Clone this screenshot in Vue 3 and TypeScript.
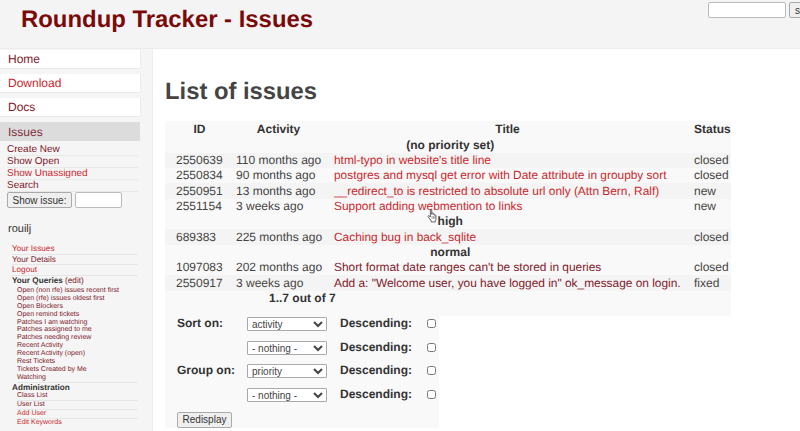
<script setup lang="ts">
type L = { t: string; v?: boolean };
const main: L[] = [{ t: 'Home', v: true }, { t: 'Download' }, { t: 'Docs', v: true }];
const issueLinks: L[] = [{ t: 'Create New', v: true }, { t: 'Show Open', v: true }, { t: 'Show Unassigned' }, { t: 'Search', v: true }];
const userLinks: L[] = [{ t: 'Your Issues' }, { t: 'Your Details', v: true }, { t: 'Logout' }];
const queries = ['Open (non rfe) issues recent first', 'Open (rfe) issues oldest first', 'Open Blockers', 'Open remind tickets', 'Patches I am watching', 'Patches assigned to me', 'Patches needing review', 'Recent Activity', 'Recent Activity (open)', 'Rest Tickets', 'Tickets Created by Me', 'Watching'];
const admin: L[] = [{ t: 'Class List', v: true }, { t: 'User List', v: true }, { t: 'Add User' }, { t: 'Edit Keywords' }];
type Row = { group?: string; id?: string; a?: string; t?: string; s?: string; v?: boolean; odd?: boolean };
const rows: Row[] = [
  { group: '(no priority set)' },
  { id: '2550639', a: '110 months ago', t: "html-typo in website's title line", s: 'closed', odd: true },
  { id: '2550834', a: '90 months ago', t: 'postgres and mysql get error with Date attribute in groupby sort', s: 'closed' },
  { id: '2550951', a: '13 months ago', t: '__redirect_to is restricted to absolute url only (Attn Bern, Ralf)', s: 'new', odd: true },
  { id: '2551154', a: '3 weeks ago', t: 'Support adding webmention to links', s: 'new' },
  { group: 'high' },
  { id: '689383', a: '225 months ago', t: 'Caching bug in back_sqlite', s: 'closed', odd: true },
  { group: 'normal' },
  { id: '1097083', a: '202 months ago', t: "Short format date ranges can't be stored in queries", s: 'closed', v: true },
  { id: '2550917', a: '3 weeks ago', t: 'Add a: "Welcome user, you have logged in" ok_message on login.', s: 'fixed', v: true, odd: true },
];
const sorts = [
  { label: 'Sort on:', value: 'activity' },
  { label: '', value: '- nothing -' },
  { label: 'Group on:', value: 'priority' },
  { label: '', value: '- nothing -' },
];
</script>

<template>
  <div class="page">
    <header class="top">
      <h1 class="brand">Roundup Tracker - Issues</h1>
      <form class="search" @submit.prevent>
        <input class="search-input" type="text" />
        <button class="search-btn" type="button">search</button>
      </form>
    </header>
    <div class="body">
      <nav class="side">
        <a v-for="m in main" :key="m.t" class="box" :class="{ v: m.v }" href="#">{{ m.t }}</a>
        <div class="box current">Issues</div>
        <ul class="sub">
          <li v-for="l in issueLinks" :key="l.t"><a :class="{ v: l.v }" href="#">{{ l.t }}</a></li>
        </ul>
        <div class="show">
          <button class="btn" type="button">Show issue:</button>
          <input class="show-input" type="text" />
        </div>
        <div class="user">rouilj</div>
        <ul class="ulinks">
          <li v-for="l in userLinks" :key="l.t"><a :class="{ v: l.v }" href="#">{{ l.t }}</a></li>
          <li class="qhead"><b>Your Queries</b> <a class="v" href="#">(edit)</a></li>
        </ul>
        <ul class="queries">
          <li v-for="q in queries" :key="q"><a class="v" href="#">{{ q }}</a></li>
        </ul>
        <div class="adminhead">Administration</div>
        <ul class="admin">
          <li v-for="l in admin" :key="l.t"><a :class="{ v: l.v }" href="#">{{ l.t }}</a></li>
        </ul>
      </nav>
      <main class="content">
        <h2 class="title">List of issues</h2>
        <table class="list">
          <colgroup>
            <col style="width: 64.5px" />
            <col style="width: 98px" />
            <col style="width: 360px" />
            <col style="width: 43.5px" />
          </colgroup>
          <thead>
            <tr><th>ID</th><th>Activity</th><th>Title</th><th class="st">Status</th></tr>
          </thead>
          <tbody>
            <template v-for="(r, i) in rows" :key="i">
              <tr v-if="r.group"><th colspan="4" class="group">{{ r.group }}</th></tr>
              <tr v-else :class="{ odd: r.odd }">
                <td>{{ r.id }}</td>
                <td>{{ r.a }}</td>
                <td class="nw"><a :class="{ v: r.v }" href="#">{{ r.t }}</a></td>
                <td class="st">{{ r.s }}</td>
              </tr>
            </template>
            <tr><th colspan="4" class="count">1..7 out of 7</th></tr>
          </tbody>
        </table>
        <form class="sortform" @submit.prevent>
          <template v-for="(s, i) in sorts" :key="i">
            <div class="lab">{{ s.label }}</div>
            <select class="sel"><option>{{ s.value }}</option></select>
            <div class="lab">Descending:</div>
            <input class="chk" type="checkbox" />
          </template>
          <button class="btn redisplay" type="button">Redisplay</button>
        </form>
        <svg class="cursor" width="12" height="16" viewBox="0 0 16 19" aria-hidden="true">
          <path d="M4.5 1.6c0-1 1.8-1 1.8 0v5.6l.2-1.2c.2-.9 1.7-.8 1.8.1v1.4c.1-.9 1.6-.9 1.8 0v1.2c.2-.8 1.6-.7 1.7.2 l.2 3.6c0 1.300-.4 2.300-1 3.200v1.700H5.500v-1.500L1.500 10.500c-.7-1.100.6-2.100 1.500-1.200l1.500 1.500z" fill="#fff" stroke="#333" stroke-width="1" stroke-linejoin="round" />
          <path d="M6.800 9.500v4M8.800 9.500v4M10.600 9.500v4" stroke="#555" stroke-width=".7" fill="none" />
        </svg>
      </main>
    </div>
  </div>
</template>

<style>
html, body { margin: 0; overflow: hidden; background: #fff; }
</style>

<style scoped>
.page { width: 800px; height: 431px; overflow: hidden; font-family: "Liberation Sans", Arial, sans-serif; font-size: 12px; color: #444; background: #f5f5f5; text-rendering: geometricPrecision; }
a { text-decoration: none; color: #c9272d; }
a.v { color: #80202a; }
ul { list-style: none; margin: 0; padding: 0; }
.top { display: flex; height: 49px; box-sizing: border-box; background: #f4f4f4; border-bottom: 1px solid #ececec; overflow: hidden; }
.brand { flex: none; width: 291px; margin: 6px 0 0 21px; font-size: 23.9px; line-height: 28px; font-weight: bold; color: #7a0a0a; white-space: nowrap; }
.search { flex: none; display: flex; gap: 3px; align-items: flex-start; margin: 2px 0 0 396px; }
.search-input { box-sizing: border-box; width: 78px; height: 16px; border: 1px solid #bbb; border-radius: 2px; background: #fff; padding: 0; }
.search-btn { box-sizing: border-box; flex: none; width: 50px; height: 16px; padding: 0 0 0 5px; text-align: left; font: 10px "Liberation Sans", sans-serif; color: #333; background: #efefef; border: 1px solid #aaa; border-radius: 2px; }
.body { display: flex; height: 382px; }
.side { flex: none; width: 140px; margin-right: 12px; display: flex; flex-direction: column; padding-top: 1px; box-sizing: content-box; }
.box { display: block; box-sizing: border-box; height: 18px; margin-bottom: 6px; padding-left: 8px; font-size: 12px; line-height: 18px; background: #fff; box-shadow: 0 1px 0 #ebebeb, 1px 0 0 #ebebeb; }
.current { height: 19px; margin-bottom: 2px; line-height: 20px; background: #dcdcdc; color: #80303a; box-shadow: none; }
.sub { margin: 0 2px 0 7px; font-size: 10px; padding-top: 1px; }
.sub li { height: 12px; line-height: 12px; border-bottom: 1px solid #e9e9e9; box-sizing: border-box; }
.show { display: flex; gap: 3px; margin: 0 0 0 7px; height: 16px; }
.btn { box-sizing: border-box; padding: 0; font: 10px "Liberation Sans", sans-serif; color: #333; background: #efefef; border: 1px solid #aaa; border-radius: 2px; }
.show .btn { width: 65px; height: 16px; }
.show-input { box-sizing: border-box; width: 47px; height: 16px; border: 1px solid #bbb; border-radius: 2px; padding: 0; background: #fff; }
.user { margin: 15px 0 0 8px; font-size: 11px; line-height: 13px; color: #333; height: 13px; }
.ulinks { margin: 8px 2px 0 12px; font-size: 8.2px; }
.ulinks li { height: 10.7px; line-height: 10px; border-bottom: 1px solid #e6e6e6; box-sizing: border-box; }
.ulinks .qhead { border-bottom: 0; color: #333; }
.qhead b { color: #333; }
.queries { margin: 0 2px 0 17px; font-size: 7px; border-bottom: 1px solid #e6e6e6; }
.queries li { height: 7.95px; line-height: 8px; }
.adminhead { margin: 0 0 0 12px; font-size: 8.2px; font-weight: bold; line-height: 9px; color: #333; }
.admin { margin: 0 2px 0 17px; font-size: 7px; }
.admin li { height: 8.9px; line-height: 8.7px; border-bottom: 1px solid #e6e6e6; box-sizing: border-box; }
.admin li:last-child { border-bottom: 0; }
.content { position: relative; flex: 1; min-width: 0; background: #fff; border-left: 1px solid #ececec; padding-left: 12px; box-sizing: border-box; }
.title { margin: 30px 0 0; font-size: 23.8px; line-height: 26px; font-weight: bold; color: #444; }
.list { margin-top: 16px; width: 566px; table-layout: fixed; border-collapse: collapse; background: #f9f9f9; }
.list th, .list td { padding: 0 6.5px; height: 15.35px; line-height: 15px; text-align: left; font-size: 12px; white-space: nowrap; overflow: visible; }
.list td.nw { font-size: 11.9px; }
.list th:first-child, .list td:first-child { padding-left: 11px; }
.list thead th { text-align: center; color: #333; padding-top: 1px; }
.list thead th.st, .list .st { text-align: left; padding-right: 0; }
.list th.group { text-align: center; color: #333; }
.list th.count { text-align: left; padding-left: 104px; padding-bottom: 10px; color: #333; }
.odd td { background: #f4f4f4; }
.sortform { display: grid; box-sizing: border-box; width: 274px; height: 112px; padding: 1px 0 0 12px; background: #f9f9f9; grid-template-columns: 70px 93px 87px 9px; grid-auto-rows: 23.67px; align-items: start; }
.lab { font-weight: bold; font-size: 12px; line-height: 12px; color: #333; }
.sel { box-sizing: border-box; width: 80px; height: 14px; padding: 0; font: 10px "Liberation Sans", sans-serif; color: #444; background: #fff; border: 1px solid #aaa; border-radius: 1px; }
.chk { width: 9px; height: 9px; margin: 2px 0 0; }
.redisplay { grid-column: 1 / -1; width: 55px; height: 16px; align-self: start; }
.cursor { position: absolute; left: 274px; top: 159px; }
</style>
